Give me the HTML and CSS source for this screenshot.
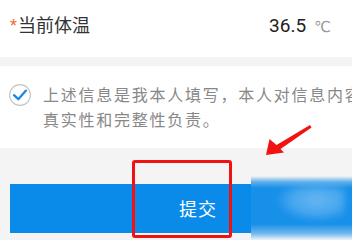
FILE: index.html
```html
<!DOCTYPE html>
<html lang="zh">
<head>
<meta charset="utf-8">
<link rel="stylesheet" href="styles.css">
</head>
<body>
<div class="page">
  <div class="row temp">
    <div class="label"><span class="req">*</span>当前体温</div>
    <div class="value"><span class="num">36.5</span><span class="unit">℃</span></div>
  </div>
  <div class="row agree">
    <span class="check">
      <svg width="22" height="22" viewBox="0 0 22 22"><circle cx="11" cy="11" r="10.4" fill="#fff" stroke="#c4c4c4" stroke-width="1.1"/><path d="M5 11.2 L9.3 15.2 L17 6.6" fill="none" stroke="#1a88e6" stroke-width="2.3" stroke-linecap="round" stroke-linejoin="round"/></svg>
    </span>
    <div class="statement">
      <div class="line">上述信息是我本人填写，本人对信息内容的</div>
      <div class="line">真实性和完整性负责。</div>
    </div>
  </div>
  <div class="actions">
    <div class="submit">提交</div>
  </div>
  <div class="watermark"><div class="cloud"></div></div>
  <div class="highlight"></div>
  <svg class="arrow" width="352" height="240" viewBox="0 0 352 240"><polygon points="266,155 269.5,139 276.5,145 310,125 311.5,127.5 280.5,149 284,152.5" fill="#f31212"/></svg>
</div>
</body>
</html>
```
FILE: styles.css
```css
* { box-sizing: border-box; }
html, body { margin: 0; padding: 0; }
body { background: #f4f4f4; font-family: "Noto Sans CJK SC", "Noto Sans", sans-serif; }
.page { position: relative; width: 352px; height: 240px; overflow: hidden; background: #f4f4f4; }
.row { background: #fff; }
.temp { height: 57px; display: flex; align-items: baseline; justify-content: space-between; padding: 13px 21px 0 10px; margin-bottom: 9px; }
.label { font-size: 18px; line-height: 22px; color: #333; }
.req { color: #f26a1b; font-family: "Liberation Sans", sans-serif; font-size: 18px; margin-right: 1px; }
.value { display: flex; align-items: baseline; }
.num { font-family: Roboto, "Liberation Sans", sans-serif; font-size: 19px; color: #222; }
.unit { font-family: "DejaVu Sans", sans-serif; font-size: 15px; color: #999; margin-left: 8px; }
.agree { height: 82px; display: flex; align-items: flex-start; padding: 16px 0 0 9px; }
.check { display: block; width: 22px; height: 22px; margin-top: 2px; margin-right: 12px; flex: none; }
.check svg { display: block; }
.statement { font-size: 16px; line-height: 25px; color: #888; letter-spacing: 1.75px; white-space: nowrap; }
.actions { padding: 36px 0 0 10px; }
.submit { width: 400px; height: 49px; background: #0a8be9; color: #fff; font-size: 18px; line-height: 49px; padding-left: 169px; letter-spacing: 1px; }
.watermark { position: absolute; left: 251px; top: 176px; width: 101px; height: 64px; background: linear-gradient(#f4f4f4 0, #5eaeea 6px, #1790ea 12px, #1790ea 48px, #6ab4ec 57px, #eef3f7 64px); overflow: hidden; }
.cloud { position: absolute; left: 24px; top: 10px; width: 70px; height: 36px; background: radial-gradient(ellipse at 60% 40%, rgba(255,255,255,0.35) 0, rgba(255,255,255,0.2) 45%, rgba(255,255,255,0) 70%); filter: blur(3px); }
.highlight { position: absolute; left: 132px; top: 160px; width: 100px; height: 78px; border: 3px solid #f01212; border-radius: 3px; }
.arrow { position: absolute; left: 0; top: 0; }
```
